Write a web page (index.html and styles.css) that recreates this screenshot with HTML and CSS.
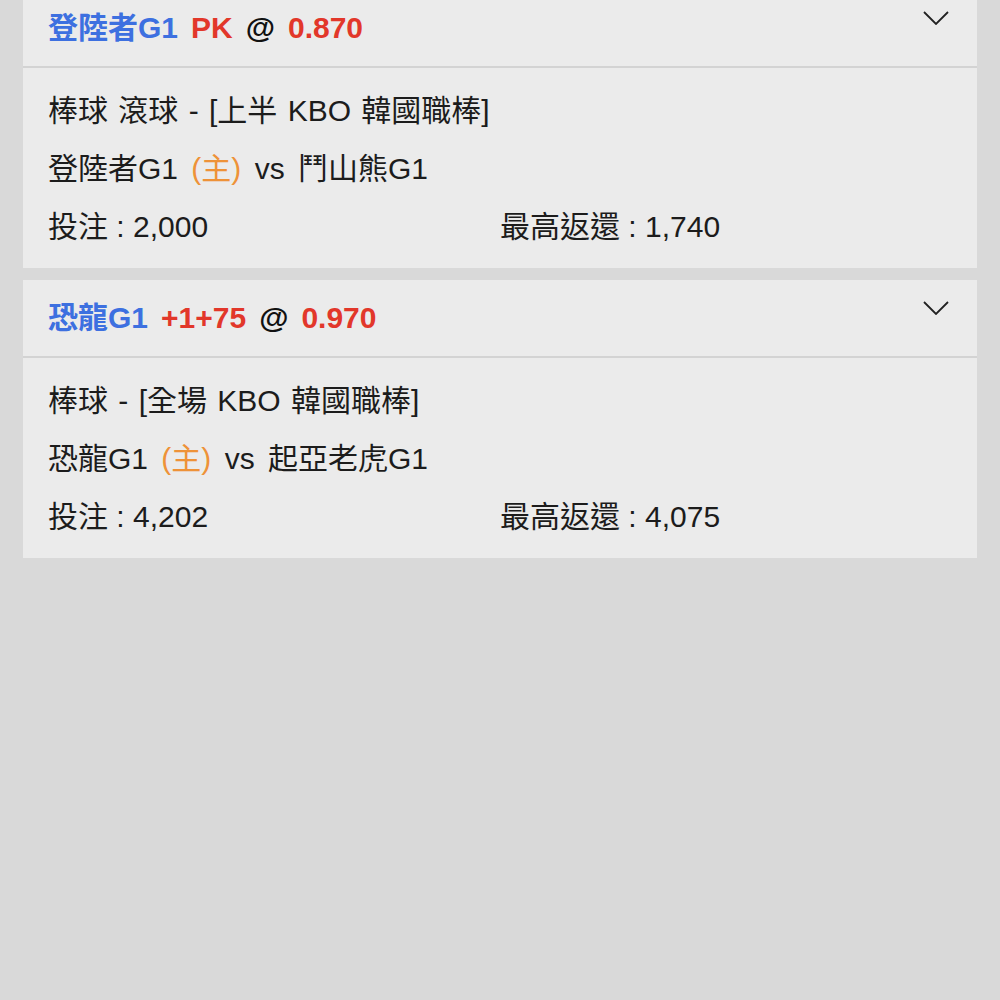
FILE: index.html
```html
<!DOCTYPE html>
<html lang="zh-Hant">
<head>
  <meta charset="UTF-8" />
  <meta name="viewport" content="width=device-width, initial-scale=1.0"/>
  <title>投注記錄</title>
  <link rel="stylesheet" href="styles.css">
</head>
<body>

  <div class="lista">

    <div class="card primeiro">
      <div class="card-topo">
        <div class="titulo">
          <span class="time">登陸者G1</span>
          <span class="linha">PK</span>
          <span class="arroba">@</span>
          <span class="odd">0.870</span>
        </div>
        <svg class="seta" width="26" height="14" viewBox="0 0 26 14">
          <path d="M1 1 L13 13 L25 1" fill="none" stroke="#222" stroke-width="1.8"/>
        </svg>
      </div>
      <div class="card-corpo">
        <div class="linha-info liga">棒球 滾球 - [上半 KBO 韓國職棒]</div>
        <div class="linha-info jogo">登陸者G1 <span class="casa">(主)</span> vs 鬥山熊G1</div>
        <div class="linha-info valores">
          <span>投注 : 2,000</span>
          <span>最高返還 : 1,740</span>
        </div>
      </div>
    </div>

    <div class="card">
      <div class="card-topo">
        <div class="titulo">
          <span class="time">恐龍G1</span>
          <span class="linha">+1+75</span>
          <span class="arroba">@</span>
          <span class="odd">0.970</span>
        </div>
        <svg class="seta" width="26" height="14" viewBox="0 0 26 14">
          <path d="M1 1 L13 13 L25 1" fill="none" stroke="#222" stroke-width="1.8"/>
        </svg>
      </div>
      <div class="card-corpo">
        <div class="linha-info liga">棒球 - [全場 KBO 韓國職棒]</div>
        <div class="linha-info jogo">恐龍G1 <span class="casa">(主)</span> vs 起亞老虎G1</div>
        <div class="linha-info valores">
          <span>投注 : 4,202</span>
          <span>最高返還 : 4,075</span>
        </div>
      </div>
    </div>

  </div>

</body>
</html>
```

FILE: styles.css
```css
body {
  margin: 0;
  font-family: "Liberation Sans", "Noto Sans CJK TC", sans-serif;
  background: #d9d9d9;
  color: #1c1c1c;
  height: 1000px;
  overflow: hidden;
}

.lista {
  padding: 0 23px;
  display: flex;
  flex-direction: column;
  gap: 12px;
}

.card {
  background: #ebebeb;
}

.primeiro {
  margin-top: -10px;
}

.card-topo {
  height: 76px;
  display: flex;
  align-items: center;
  padding: 0 25px;
  border-bottom: 2px solid #d3d3d3;
  position: relative;
}

.titulo {
  font-size: 30px;
  font-weight: bold;
  line-height: 40px;
  display: flex;
  align-items: baseline;
  gap: 13px;
}

.time {
  color: #3d70e0;
}

.linha,
.odd {
  color: #e2372a;
}

.arroba {
  color: #111;
}

.seta {
  position: absolute;
  right: 28px;
  top: 21px;
}

.card-corpo {
  padding: 14px 25px 12px;
}

.linha-info {
  font-size: 30px;
  height: 58px;
  line-height: 58px;
}

.liga {
  word-spacing: 2px;
}

.jogo {
  word-spacing: 5px;
}

.casa {
  color: #ee9238;
}

.valores {
  display: grid;
  grid-template-columns: 1fr 1fr;
}
```
